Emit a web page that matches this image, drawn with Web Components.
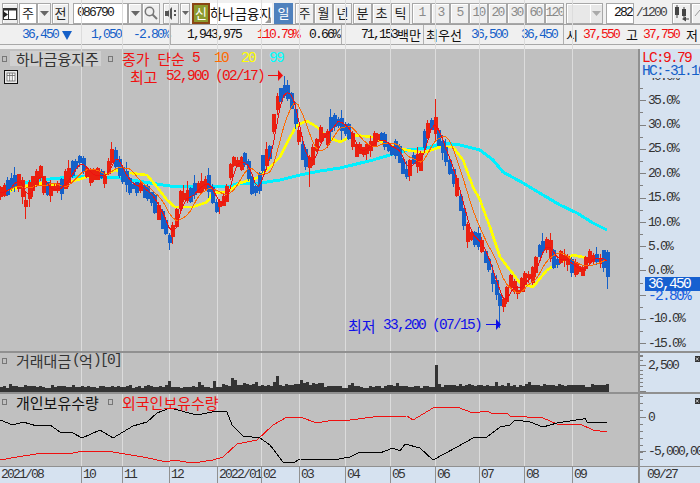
<!DOCTYPE html>
<html lang="ko">
<head>
<meta charset="utf-8">
<title>chart</title>
<style>
  html, body { margin: 0; padding: 0; width: 700px; height: 483px; overflow: hidden; background: #f0f0f0; }
</style>
</head>
<body>
<hts-app></hts-app>
<script>
const TYPE = `
  .n { font: 13px/14px "Liberation Mono", monospace; letter-spacing: -1.8px; white-space: pre; }
  .k { font: 13px/14px "Noto Sans CJK KR", sans-serif; white-space: pre; }
  .N { font: 14.5px/15px "Liberation Mono", monospace; letter-spacing: -1.7px; white-space: pre; }
  .K { font: 15px/15px "Noto Sans CJK KR", sans-serif; white-space: pre; word-spacing: 3.5px; }
`;
const BLUE = '#1560c8', RED = '#f01010';

class HtsBtn extends HTMLElement {
  connectedCallback() {
    this.attachShadow({ mode: 'open' });
    this.shadowRoot.innerHTML = `
      <style>
        :host { display: flex; align-items: center; justify-content: center; box-sizing: border-box;
          height: 21px; width: 19px; flex: none; overflow: hidden;
          background: #efefef; border: 1px solid #a8a8a8; box-shadow: inset 1px 1px 0 #fff;
          color: #222; font: 13px/14px "Noto Sans CJK KR", sans-serif; }
        :host([dim]) { color: #8a8a8a; font: 13px/14px "Liberation Mono", monospace; letter-spacing: -1.8px; }
        :host([on]) { background: #4f81bd; color: #fff; box-shadow: none; border-color: #4f81bd; }
        :host([white]) { background: #fff; box-shadow: none; justify-content: flex-start; }
        :host([flat]) { background: #e8e8e8; }
      </style>
      <slot></slot>`;
  }
}

class HtsToolbar extends HTMLElement {
  connectedCallback() {
    this.attachShadow({ mode: 'open' });
    const arrow = `<svg width="9" height="5"><polygon points="0,0 9,0 4.5,5" fill="#666"/></svg>`;
    const arrowDim = `<svg width="9" height="5"><polygon points="0,0 9,0 4.5,5" fill="#aaa"/></svg>`;
    this.shadowRoot.innerHTML = `
      <style>
        :host { display: flex; align-items: center; box-sizing: border-box; height: 25px; padding: 2px 0 0 2px;
          background: #f0f0f0; border-bottom: 1px solid #a0a0a0; overflow: hidden; }
        ${TYPE}
        .sin { width: 18px; height: 21px; box-sizing: border-box; flex: none; margin-left: 2px; border: 2px solid #8a4513; background: #8c9a2e;
          color: #fff; display: flex; align-items: center; justify-content: center; font: 13px/14px "Noto Sans CJK KR", sans-serif; }
        .name { width: 62px; height: 21px; flex: none; background: #fff; position: relative; display: flex; align-items: center; overflow: hidden;
          color: #111; font: 13.4px/14px "Noto Sans CJK KR", sans-serif; white-space: nowrap; }
        .name::after { content: ""; position: absolute; right: 1px; bottom: 1px; border: 3px solid transparent; border-right-color: #999; border-bottom-color: #999; }
        .total { width: 31px; flex: none; margin-left: 2px; color: #444; }
      </style>
      <hts-btn style="width:16px">
        <svg width="14" height="15" viewBox="0 0 14 15"><rect x=".5" y="2.5" width="13" height="11" fill="#fff" stroke="#333"/><rect x=".5" y="2.5" width="13" height="2" fill="#333"/><polygon points="0,5 0,12 5,8.5" fill="#222"/><line x1="5.5" y1="4" x2="5.5" y2="13" stroke="#333"/></svg>
      </hts-btn>
      <hts-btn white style="margin-left:1px;width:18px;justify-content:center">주</hts-btn>
      <hts-btn style="width:14px">${arrow}</hts-btn>
      <hts-btn style="margin-left:1px;width:17px">전</hts-btn>
      <hts-btn white style="margin-left:4px;width:55px;padding-left:3px"><span class="n">086790</span></hts-btn>
      <hts-btn style="width:14px">${arrow}</hts-btn>
      <hts-btn style="width:18px">
        <svg width="14" height="14" viewBox="0 0 14 14" fill="none" stroke="#777"><circle cx="5.5" cy="5.5" r="4.2" stroke-width="1.5"/><line x1="8.5" y1="8.5" x2="13" y2="13" stroke-width="2"/></svg>
      </hts-btn>
      <hts-btn style="margin-left:3px;width:16px">
        <svg width="13" height="13" viewBox="0 0 13 13"><polygon points="0,4 3,4 7,0 7,13 3,9 0,9" fill="#555"/><rect x="9" y="3" width="2" height="2" fill="#555"/><rect x="9" y="7" width="2" height="2" fill="#555"/></svg>
      </hts-btn>
      <hts-btn style="margin-left:1px;width:10px"><svg width="7" height="4"><polygon points="0,0 7,0 3.5,4" fill="#666"/></svg></hts-btn>
      <div class="sin">신</div>
      <div class="name">하나금융지</div>
      <hts-btn on style="margin-left:2px">일</hts-btn>
      <hts-btn style="margin-left:2px">주</hts-btn>
      <hts-btn>월</hts-btn>
      <hts-btn>년</hts-btn>
      <hts-btn style="margin-left:1px">분</hts-btn>
      <hts-btn>초</hts-btn>
      <hts-btn>틱</hts-btn>
      <hts-btn dim style="margin-left:2px">1</hts-btn>
      <hts-btn dim>3</hts-btn>
      <hts-btn dim>5</hts-btn>
      <hts-btn dim>10</hts-btn>
      <hts-btn dim>20</hts-btn>
      <hts-btn dim>30</hts-btn>
      <hts-btn dim>60</hts-btn>
      <hts-btn dim>120</hts-btn>
      <hts-btn flat style="margin-left:2px;width:24px;border-right:0"></hts-btn>
      <hts-btn flat style="width:13px;border-left:0">${arrowDim}</hts-btn>
      <hts-btn white style="margin-left:3px;width:28px;justify-content:flex-end;padding-right:1px"><span class="n" style="color:#111">282</span></hts-btn>
      <span class="n total">/1200</span>
      <hts-btn style="width:19px;margin-left:5px">
        <svg width="17" height="17" viewBox="0 0 17 17" fill="#444"><rect x="2" y="2" width="4" height="8"/><rect x="3.5" y="0" width="1" height="13"/><rect x="9" y="4" width="4" height="7"/><rect x="10.5" y="2" width="1" height="11"/><polygon points="9,14 13,11.5 13,16.5"/><rect x="12" y="13.5" width="4" height="1"/></svg>
      </hts-btn>
      <hts-btn style="width:19px">
        <svg width="15" height="10" viewBox="0 0 15 10" fill="none" stroke="#999"><polyline points="2,8 7,2 12,8"/></svg>
      </hts-btn>`;
  }
}

class HtsQuote extends HTMLElement {
  connectedCallback() {
    this.attachShadow({ mode: 'open' });
    const cells = [
      [22, 36, 'n', '36,450', BLUE], [62, 0, 'tri'], [91, 29, 'n', '1,050', BLUE], [133, 36, 'n', '-2.80%', BLUE],
      [187, 54, 'n', '1,943,975', '#111'], [257, 42, 'n', '110.79%', RED], [309, 32, 'n', '0.66%', '#111'],
      [361, 36, 'n', '71,153', '#111'], [397, 24, 'k', '백만', '#111'], [426, 36, 'k', '최우선', '#111'],
      [471, 36, 'n', '36,500', BLUE], [521, 36, 'n', '36,450', BLUE], [566, 12, 'k', '시', '#111'],
      [583, 36, 'n', '37,550', RED], [626, 12, 'k', '고', '#111'], [643, 36, 'n', '37,750', RED], [686, 12, 'k', '저', '#111']
    ];
    const seps = [170, 341, 423, 563];
    let x = 0, html = '';
    for (const c of cells) {
      if (c[2] === 'tri') {
        html += `<svg style="margin-left:${c[0] - x}px;flex:none" width="10" height="10"><polygon points="0,1 10,1 5,10" fill="${BLUE}"/></svg>`;
        x = c[0] + 10;
        continue;
      }
      for (const s of seps) {
        if (s >= x && s < c[0]) {
          html += `<i style="margin-left:${s - x}px"></i>`;
          x = s + 1;
        }
      }
      html += `<span class="${c[2]}" style="margin-left:${c[0] - x}px;width:${c[1]}px;color:${c[4]}">${c[3]}</span>`;
      x = c[0] + c[1];
    }
    this.shadowRoot.innerHTML = `
      <style>
        :host { display: flex; align-items: center; box-sizing: border-box; height: 20px; background: #f0f0f0;
          border-bottom: 1px solid #a8a8a8; overflow: hidden; }
        ${TYPE}
        span { flex: none; display: block; }
        i { display: block; flex: none; width: 1px; height: 19px; background: #b0b0b0; }
      </style>${html}`;
  }
}

// piecewise linear lookup over [x, y] points
function interp(pts, x) {
  if (x <= pts[0][0]) return pts[0][1];
  for (let i = 1; i < pts.length; i++) {
    if (x <= pts[i][0]) {
      const a = pts[i - 1], b = pts[i];
      return a[1] + (b[1] - a[1]) * (x - a[0]) / (b[0] - a[0]);
    }
  }
  return pts[pts.length - 1][1];
}
function line(pts, color, w) {
  const p = pts.map(q => q[0].toFixed(1) + ',' + q[1].toFixed(1)).join(' ');
  return `<polyline points="${p}" fill="none" stroke="${color}" stroke-width="${w}" stroke-linejoin="round"/>`;
}
const GRID = [81, 122, 169, 217, 261, 299, 345, 390, 435, 479, 524, 572];
function grid(h) {
  return GRID.map(x => `<rect x="${x}" y="0" width="1" height="${h}" fill="#dcdcdc"/>`).join('');
}

const PRICE = [[0,192],[5,190],[12,183],[16,178],[22,190],[24,208],[28,190],[35,178],[40,172],[45,190],[50,190],[55,188],[60,190],[65,178],[75,166],[80,160],[85,172],[95,178],[100,172],[105,180],[112,152],[120,170],[130,185],[145,190],[155,205],[165,225],[169,240],[175,222],[180,200],[190,195],[200,185],[208,183],[215,205],[225,200],[232,160],[240,165],[245,158],[252,188],[257,190],[262,165],[270,150],[275,105],[283,88],[290,97],[295,117],[300,148],[308,165],[313,157],[320,133],[327,137],[332,120],[338,122],[348,130],[355,150],[365,150],[375,140],[380,137],[388,147],[397,150],[403,167],[407,173],[413,157],[420,163],[425,133],[433,120],[438,137],[447,160],[453,177],[462,210],[467,233],[472,237],[477,240],[483,250],[492,277],[497,290],[502,313],[503,303],[510,283],[518,292],[525,277],[533,277],[538,250],[547,243],[555,263],[563,257],[573,267],[582,273],[588,257],[600,260],[605,257],[607,270]];
const CYAN = [[5,186],[40,180],[80,176],[120,178],[150,183],[170,186],[200,186],[230,186],[240,183],[260,183],[280,180],[300,175],[320,171],[340,168],[373,160],[383,157],[407,150],[427,148],[443,143],[460,145],[480,150],[493,160],[503,172],[523,183],[543,195],[560,205],[577,213],[593,223],[607,230]];
const YELLOW = [[7,192],[20,187],[43,183],[57,185],[70,182],[87,177],[103,176],[115,170],[130,173],[147,175],[157,187],[167,200],[175,207],[193,207],[207,202],[213,193],[227,192],[240,183],[257,178],[270,167],[280,157],[290,137],[297,125],[307,121],[317,127],[327,137],[340,142],[353,135],[373,137],[387,145],[407,150],[423,153],[440,147],[453,147],[463,160],[473,187],[480,200],[490,227],[500,257],[510,270],[520,283],[533,287],[547,270],[560,262],[573,255],[587,258],[607,262]];
const EXTREMES = [[112,142,null],[283,76,null],[433,99,null],[168,null,250],[308,null,187],[501,null,328],[24,null,219],[279,88,null]];

class HtsPriceChart extends HTMLElement {
  connectedCallback() {
    this.attachShadow({ mode: 'open' });
    let seed = 12345;
    const rnd = () => (seed = (seed * 1103515 + 12345) % 2147483) / 2147483;
    const N = 170, dx = 607 / (N - 1), bars = [];
    let up = true;
    for (let i = 0; i < N; i++) {
      const x = i * dx, c = interp(PRICE, x), slope = interp(PRICE, x + dx) - interp(PRICE, x - dx);
      const pUp = slope < -1 ? 0.8 : slope > 1 ? 0.2 : 0.45;
      if (rnd() < 0.75) up = rnd() < pUp;
      const body = 3 + rnd() * 8 + Math.min(Math.abs(slope) * 0.6, 8);
      const top = c - body / 2 + (rnd() - .5) * 4;
      const reach = rnd() < .3 ? 9 : 3;
      bars.push({ x, top, bot: top + body, up, hi: top - rnd() * reach, lo: top + body + rnd() * reach, c: c + (rnd() - .5) * 4 });
    }
    for (const [ex, hi, lo] of EXTREMES) {
      const b = bars[Math.round(ex / dx)];
      if (hi !== null) b.hi = hi;
      if (lo !== null) b.lo = lo;
    }
    Object.assign(bars[N - 1], { up: false, top: 252, bot: 277, hi: 250, lo: 289 });
    Object.assign(bars[N - 2], { up: false, top: 250, bot: 268, hi: 250, lo: 272 });
    const ma = n => bars.map((b, i) => {
      const s = bars.slice(Math.max(0, i - n + 1), i + 1);
      return [b.x, s.reduce((a, q) => a + q.c, 0) / s.length];
    });
    const candles = bars.map(b => {
      const col = b.up ? '#ea2010' : BLUE, x = Math.round(b.x);
      return `<rect x="${x}" y="${b.hi.toFixed(0)}" width="1" height="${(b.lo - b.hi).toFixed(0)}" fill="${col}"/>` +
        `<rect x="${x - 1}" y="${b.top.toFixed(0)}" width="4" height="${Math.max(1, b.bot - b.top).toFixed(0)}" fill="${col}"/>`;
    }).join('');
    this.shadowRoot.innerHTML = `
      <style>
        :host { display: block; position: relative; height: 302px; background: #c0c0c0; }
        ${TYPE}
        svg.plot { position: absolute; left: 0; top: -49px; shape-rendering: crispEdges; }
        .legend { position: absolute; left: 0; top: 2px; display: flex; align-items: center; height: 15px; }
        .mark { width: 3px; height: 4px; border: 1px solid #777; flex: none; }
        .title { background: #d0d0d0; color: #333; width: 91px; height: 15px; margin-left: 3px; padding-left: 6px; box-sizing: border-box; flex: none; }
        .callout { position: absolute; display: flex; align-items: center; height: 14px; }
      </style>
      <svg class="plot" width="640" height="351">
        ${grid(351)}
        ${line(CYAN, '#00f0ff', 3)}
        ${line(YELLOW, '#ffff00', 2.6)}
        ${candles}
        ${line(ma(7), '#ff6a00', 1)}
        ${line(ma(3), '#f01010', 1)}
      </svg>
      <div class="legend">
        <span class="mark" style="margin-left:2px"></span>
        <span class="K title">하나금융지주</span>
        <span class="mark" style="margin-left:7px"></span>
        <span class="K" style="color:${RED};margin-left:9px;width:70px">종가 단순</span>
        <span class="N" style="color:${RED};width:7px">5</span>
        <span class="N" style="color:#ff6a00;margin-left:15px;width:14px">10</span>
        <span class="N" style="color:#ffff00;margin-left:13px;width:14px">20</span>
        <span class="N" style="color:#00ffff;margin-left:14px;width:14px">99</span>
      </div>
      <svg style="position:absolute;left:4px;top:21px" width="14" height="14" viewBox="0 0 14 14"><rect x=".5" y=".5" width="13" height="13" fill="#e8e8e8" stroke="#111"/><rect x="3" y="3" width="8" height="8" fill="#fff" stroke="#666" stroke-width=".8"/><path d="M3 5.5H11M5.7 3V11M8.3 3V11" stroke="#666" stroke-width=".8"/></svg>
      <div class="callout" style="left:130px;top:20px;color:${RED}">
        <span class="K" style="width:36px">최고</span><span class="N" style="width:98px">52,900 (02/17)</span>
        <svg style="margin-left:4px" width="16" height="12"><rect x="0" y="5" width="10" height="1" fill="${RED}"/><polygon points="10,0 15,5.5 10,11" fill="${RED}"/></svg>
      </div>
      <div class="callout" style="left:348px;top:269px;color:#1010e8">
        <span class="K" style="width:35px">최저</span><span class="N" style="width:98px">33,200 (07/15)</span>
        <svg style="margin-left:5px" width="16" height="12"><rect x="0" y="5" width="10" height="1" fill="#1010e8"/><polygon points="10,0 15,5.5 10,11" fill="#1010e8"/></svg>
      </div>`;
  }
}

class HtsVolume extends HTMLElement {
  connectedCallback() {
    this.attachShadow({ mode: 'open' });
    let seed = 777;
    const rnd = () => (seed = (seed * 1103515 + 12345) % 2147483) / 2147483;
    const spikes = { 168: 11, 212: 11, 230: 14, 233: 12, 275: 16, 272: 10, 300: 12, 435: 27, 438: 8 };
    let bars = '';
    for (let x = 0; x < 608; x += 3) {
      let h = 4 + rnd() * 3 + (x > 220 && x < 320 ? 2 : 0) + (x > 450 ? 1 : 0) + (rnd() < .1 ? 3 : 0);
      for (const s in spikes) if (Math.abs(s - x) < 2) h = Math.max(h, spikes[s]);
      bars += `<rect x="${x}" y="${(39 - h).toFixed(0)}" width="3" height="${h.toFixed(0)}" fill="#333"/>`;
    }
    this.shadowRoot.innerHTML = `
      <style>
        :host { display: block; position: relative; height: 39px; background: #c0c0c0; }
        ${TYPE}
        svg { position: absolute; left: 0; top: 0; shape-rendering: crispEdges; }
        .legend { position: absolute; left: 0; top: 0; display: flex; align-items: center; color: #333; height: 15px; }
        .mark { width: 3px; height: 4px; border: 1px solid #777; flex: none; margin: 0 9px 0 2px; }
      </style>
      <svg width="640" height="39">${grid(39)}${bars}</svg>
      <div class="legend"><span class="mark"></span><span class="K" style="width:56px">거래대금</span><span class="N" style="width:7px">(</span><span class="K" style="width:14px">억</span><span class="N">)[0]</span></div>`;
  }
}

const BLACK = [[0,420],[13,425],[23,422],[37,426],[50,425],[60,432],[73,433],[82,438],[100,430],[113,438],[133,426],[147,422],[157,413],[170,408],[197,415],[217,411],[227,412],[232,425],[243,436],[260,438],[270,445],[283,462],[293,463],[300,459],[333,460],[350,457],[360,452],[380,453],[393,448],[400,451],[405,444],[420,448],[433,460],[457,447],[473,438],[487,437],[500,427],[510,425],[515,420],[530,422],[543,427],[557,423],[583,419],[585,418],[587,422],[607,422]];
const FOREIGN = [[0,460],[17,457],[43,453],[73,453],[83,451],[113,452],[143,457],[167,462],[173,460],[193,463],[213,460],[223,457],[237,444],[257,440],[273,425],[287,417],[300,417],[317,423],[333,420],[350,420],[373,417],[407,416],[413,420],[433,408],[457,407],[473,413],[487,411],[493,414],[507,413],[510,416],[543,418],[557,424],[580,424],[593,430],[607,432]];

class HtsHoldings extends HTMLElement {
  connectedCallback() {
    this.attachShadow({ mode: 'open' });
    this.shadowRoot.innerHTML = `
      <style>
        :host { display: block; position: relative; height: 72px; background: #c0c0c0; }
        ${TYPE}
        svg { position: absolute; left: 0; top: -394px; shape-rendering: crispEdges; }
        .legend { position: absolute; left: 0; top: 0; display: flex; align-items: center; height: 16px; }
        .mark { width: 3px; height: 4px; border: 1px solid #777; flex: none; margin: 0 9px 0 2px; }
      </style>
      <svg width="640" height="466">
        <g transform="translate(0,394)">${grid(72)}</g>
        ${line(FOREIGN, '#f01010', 1)}
        ${line(BLACK, '#000', 1)}
      </svg>
      <div class="legend">
        <span class="mark"></span><span class="K" style="color:#111;width:84px">개인보유수량</span>
        <span class="mark" style="margin-left:8px"></span><span class="K" style="color:${RED}">외국인보유수량</span>
      </div>`;
  }
}

class HtsAxis extends HTMLElement {
  connectedCallback() {
    this.attachShadow({ mode: 'open' });
    const pct = [[100,'35.0%'],[124,'30.0%'],[148,'25.0%'],[173,'20.0%'],[197,'15.0%'],[222,'10.0%'],[246,'5.0%'],[270,'0.0%'],[318,'-10.0%'],[343,'-15.0%']];
    const other = [[365,'2,500'],[417,'0'],[451,'-5,000,000']];
    let ticks = '';
    for (let i = 0; i < 12; i++) {
      const y = 76 + i * 24.3;
      ticks += `<rect x="0" y="${Math.round(y)}" width="6" height="1"/><rect x="0" y="${Math.round(y + 12.15)}" width="3" height="1"/>`;
    }
    ticks += `<rect x="0" y="365" width="6" height="1"/>`;
    for (const y of [356, 360, 370, 374, 378, 382, 386]) ticks += `<rect x="0" y="${y}" width="3" height="1"/>`;
    ticks += `<rect x="0" y="391" width="6" height="1"/>`;
    for (let y = 396; y < 466; y += 7) ticks += `<rect x="0" y="${y}" width="3" height="1"/>`;
    ticks += `<rect x="0" y="417" width="6" height="1"/><rect x="0" y="451" width="6" height="1"/>`;
    const lab = a => a.map(([y, t]) => `<span class="n lab" style="top:${y - 49 - 6}px">${t}</span>`).join('');
    const closer = y => `<svg style="position:absolute;left:55px;top:${y - 49}px" width="5" height="6"><rect width="5" height="6" fill="#333"/><path d="M1 1.5L3.5 4.5M3.5 1.5L1 4.5" stroke="#ccc"/></svg>`;
    this.shadowRoot.innerHTML = `
      <style>
        :host { display: block; position: relative; width: 60px; height: 417px; flex: none; background: #d6e2f0; overflow: hidden;
          color: #333; }
        ${TYPE}
        svg.ticks { position: absolute; left: 0; top: -49px; fill: #808080; shape-rendering: crispEdges; }
        .lab { position: absolute; left: 8px; }
        .hr { position: absolute; left: 0; width: 60px; height: 2px; background: #909090; }
        .live { position: absolute; left: 5px; top: 228px; width: 55px; height: 14px; line-height: 14px; background: #1660d0; color: #fff; padding-left: 3px; box-sizing: border-box; }
        .sub { position: absolute; left: 8px; top: 242px; line-height: 11px; color: #1660e0; }
        .big { position: absolute; left: 2px; font: 14.5px/13px "Liberation Mono", monospace; letter-spacing: -1.7px; white-space: pre; }
        .cover { position: absolute; left: 0; top: 0; width: 60px; height: 29px; background: #d6e2f0; }
      </style>
      <svg class="ticks" width="60" height="466">${ticks}</svg>
      <span class="n lab" style="top:21px">40.0%</span>
      ${lab(pct)}${lab(other)}
      <div class="cover"></div>
      <span class="big" style="top:3px;color:${RED}">LC:9.79</span>
      <span class="big" style="top:16px;color:${BLUE}">HC:-31.10</span>
      <span class="N live">36,450</span>
      <span class="N sub">-2.80%</span>
      <div class="hr" style="top:302px"></div>
      <div class="hr" style="top:343px"></div>
      ${closer(356)}${closer(398)}`;
  }
}

class HtsDates extends HTMLElement {
  connectedCallback() {
    this.attachShadow({ mode: 'open' });
    const items = [[0,'2021/08'],[81,'10'],[122,'11'],[169,'12'],[217,'2022/01'],[261,'02'],[299,'03'],[345,'04'],[390,'05'],[435,'06'],[479,'07'],[524,'08'],[572,'09']];
    const html = items.map((it, i) => {
      const w = (i + 1 < items.length ? items[i + 1][0] : 638) - it[0];
      return `<span class="n cell${i ? ' sep' : ''}" style="width:${w}px">${it[1]}</span>`;
    }).join('');
    this.shadowRoot.innerHTML = `
      <style>
        :host { display: flex; box-sizing: border-box; height: 17px; background: #d6e2f0; color: #333; overflow: hidden; border-top: 1px solid #909090; }
        ${TYPE}
        .cell { display: flex; align-items: center; box-sizing: border-box; flex: none; padding-left: 1px; height: 16px; }
        .sep { border-left: 1px solid #909090; }
        .end { border-left: 2px solid #909090; padding-left: 7px; width: 60px; }
      </style>
      ${html}<span class="n cell end">09/27</span>`;
  }
}

class HtsApp extends HTMLElement {
  connectedCallback() {
    this.attachShadow({ mode: 'open' });
    this.shadowRoot.innerHTML = `
      <style>
        :host { display: block; width: 700px; height: 483px; background: #f0f0f0; overflow: hidden; }
        .gap { height: 4px; }
        .body { display: flex; height: 417px; }
        .panes { width: 640px; flex: none; display: flex; flex-direction: column; }
        .hr { height: 2px; background: #909090; flex: none; position: relative; z-index: 1; }
        .bar { width: 0; border-left: 2px solid #909090; flex: none; margin-left: -2px; position: relative; }
      </style>
      <hts-toolbar></hts-toolbar>
      <hts-quote></hts-quote>
      <div class="gap"></div>
      <div class="body">
        <div class="panes">
          <hts-price-chart></hts-price-chart>
          <div class="hr"></div>
          <hts-volume></hts-volume>
          <div class="hr"></div>
          <hts-holdings></hts-holdings>
        </div>
        <div class="bar"></div>
        <hts-axis></hts-axis>
      </div>
      <hts-dates></hts-dates>`;
  }
}

customElements.define('hts-btn', HtsBtn);
customElements.define('hts-toolbar', HtsToolbar);
customElements.define('hts-quote', HtsQuote);
customElements.define('hts-price-chart', HtsPriceChart);
customElements.define('hts-volume', HtsVolume);
customElements.define('hts-holdings', HtsHoldings);
customElements.define('hts-axis', HtsAxis);
customElements.define('hts-dates', HtsDates);
customElements.define('hts-app', HtsApp);
</script>
</body>
</html>
